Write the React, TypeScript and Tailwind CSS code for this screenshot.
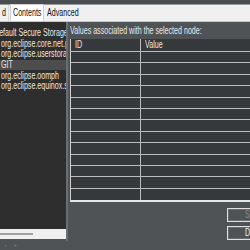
import * as React from "react";

const nodes = [
  { label: "Default Secure Storage", indent: -6 },
  { label: "org.eclipse.core.net.proxy", indent: 1 },
  { label: "org.eclipse.userstorage", indent: 1 },
  { label: "GIT", indent: 1, selected: true },
  { label: "org.eclipse.oomph", indent: 1 },
  { label: "org.eclipse.equinox.secure", indent: 1 },
];

const rows = Array.from({ length: 13 });

// the screenshot's text is squeezed sideways; keep glyph height, narrow the run
const Txt: React.FC<{ children: React.ReactNode }> = ({ children }) => (
  <span className="inline-block origin-left scale-x-[0.71] whitespace-nowrap">{children}</span>
);

const App: React.FC = () => {
  return (
    <div
      className="w-[250px] h-[250px] overflow-hidden bg-[#505356] flex flex-col text-[10px] leading-none"
      style={{ fontFamily: '"Liberation Sans", Arial, sans-serif' }}
    >
      {/* window top edge */}
      <div className="h-[5px] shrink-0 bg-[#4a4d50] border-b border-[#9a9a9a]" />

      {/* tabs */}
      <div className="h-[17px] shrink-0 bg-[#f0f0f0] flex items-stretch text-[#111] border-b border-[#c8c8c8]">
        <div className="w-[9px] shrink-0 overflow-hidden flex items-center border-r border-[#d8d8d8]">
          <span className="pl-[2px]">
            <Txt>d</Txt>
          </span>
        </div>
        <div className="w-[34px] shrink-0 flex items-center pl-[2px] ml-[1px] -mt-[1px] bg-white border-x border-t border-[#d0d0d0]">
          <Txt>Contents</Txt>
        </div>
        <div className="flex items-center pl-[3px]">
          <Txt>Advanced</Txt>
        </div>
      </div>

      <div className="flex-1 flex min-h-0">
        {/* tree */}
        <div className="w-[68px] shrink-0 flex flex-col">
          <div className="h-[221px] flex flex-col border-r-2 border-[#6b6e71]">
            <div className="flex-1 bg-[#2e2e2e] pt-[6px] overflow-hidden text-[#e8e8e8]">
              {nodes.map((n) => (
                <div
                  key={n.label}
                  className={`h-[10.6px] flex items-center ${n.selected ? "bg-[#4d4d4d]" : ""}`}
                >
                  <span className="shrink-0" style={{ marginLeft: n.indent }}>
                    <Txt>{n.label}</Txt>
                  </span>
                </div>
              ))}
            </div>
            <div className="h-[10px] bg-[#f0f0f0] flex items-center">
              <div className="w-[33px] h-[2px] bg-[#a0a0a0]" />
            </div>
            <div className="h-[2px] bg-[#505356]" />
          </div>
          <div className="flex gap-[8px] pl-[5px] pt-[3px] text-[#aaa] text-[6px]">
            <span>'</span>
            <span>''</span>
          </div>
        </div>

        {/* values */}
        <div className="flex-1 min-w-0 overflow-hidden flex flex-col pl-[2px] pt-[3px] text-[#e8e8e8]">
          <div className="h-[12px] flex items-center">
            <Txt>Values associated with the selected node:</Txt>
          </div>
          <div className="w-[200px] shrink-0 mt-[2px] border-l border-[#cfcfcf] border-b-2 border-b-[#e8e8e8] bg-[#36393c]">
            <div className="h-[13px] flex border-b border-[#bdbdbd]">
              <div className="w-[70px] shrink-0 border-r border-[#bdbdbd] flex items-center pl-[4px]">
                <Txt>ID</Txt>
              </div>
              <div className="flex items-center pl-[4px]">
                <Txt>Value</Txt>
              </div>
            </div>
            {rows.map((_, i) => (
              <div key={i} className="h-[11.4px] flex border-b border-[#bdbdbd] last:border-b-0">
                <div className="w-[70px] shrink-0 border-r border-[#bdbdbd]" />
                <div className="flex-1" />
              </div>
            ))}
          </div>
          <div className="flex flex-col gap-[4px] mt-[6px] pl-[157px]">
            <div className="w-[42px] h-[14px] border border-[#e0e0e0] shadow-[inset_0_0_0_1px_#6a6d70] flex items-center pl-[17px] text-[#8a8a8a]">
              <Txt>Save</Txt>
            </div>
            <div className="w-[42px] h-[14px] border border-[#e0e0e0] shadow-[inset_0_0_0_1px_#6a6d70] flex items-center pl-[17px] text-[#f0f0f0]">
              <Txt>Delete</Txt>
            </div>
          </div>
        </div>
      </div>
    </div>
  );
};

export default App;
